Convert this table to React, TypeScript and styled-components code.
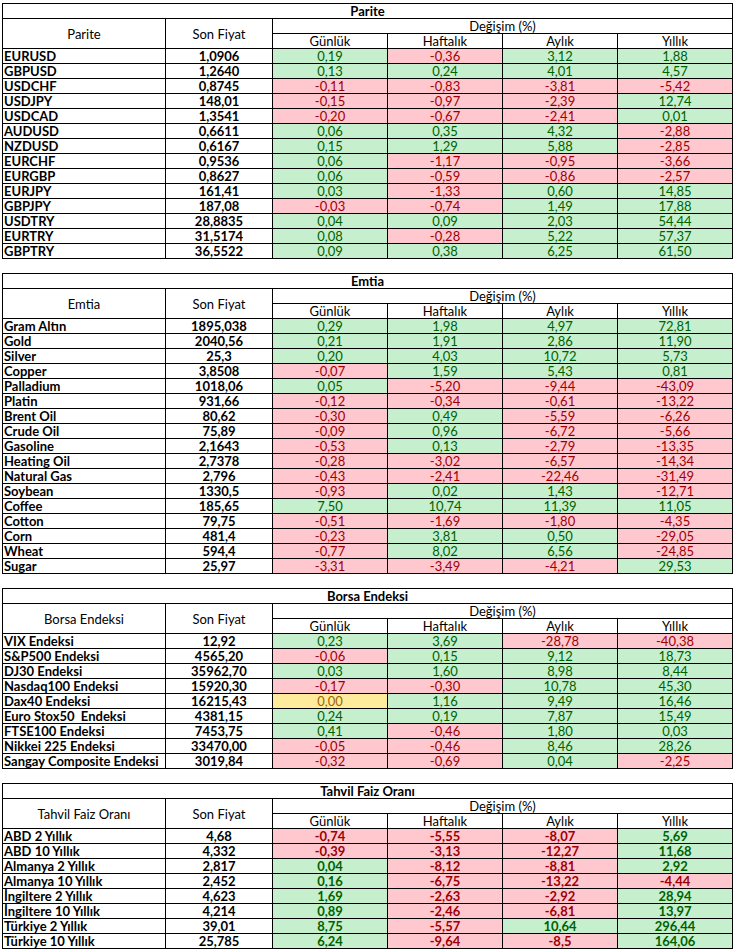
import React from 'react';
import styled, { createGlobalStyle } from 'styled-components';

type Tone = 'up' | 'down' | 'flat';

const GlobalStyle = createGlobalStyle`
  html, body { margin: 0; padding: 0; background: #ffffff; }
  body { font-family: Lato, "Liberation Sans", sans-serif; }
`;

const Page = styled.div`
  display: flex;
  flex-direction: column;
  gap: 14px;
  padding: 3px 0 0 2px;
  width: 730px;
`;

const Table = styled.table`
  border-collapse: collapse;
  table-layout: fixed;
  width: 730px;
  font-family: Lato, "Liberation Sans", sans-serif;
  font-size: 13px;
  color: #000000;
`;

const Cell = styled.td`
  border: 1px solid #000000;
  height: 14px;
  padding: 0 1px;
  line-height: 14px;
  white-space: pre;
  overflow: hidden;
  vertical-align: bottom;
`;

const TitleCell = styled(Cell)`
  text-align: center;
  font-weight: 700;
`;

const HeadCell = styled(Cell)`
  text-align: center;
  font-weight: 400;
  vertical-align: middle;
`;

const NameCell = styled(Cell)`
  text-align: left;
  font-weight: 700;
`;

const PriceCell = styled(Cell)`
  text-align: center;
  font-weight: 700;
`;

const toneBg: Record<Tone, string> = { up: '#C6EFCE', down: '#FFC7CE', flat: '#FFEB9C' };
const toneFg: Record<Tone, string> = { up: '#006100', down: '#9C0006', flat: '#9C6500' };

const ChangeCell = styled(Cell)<{ $tone: Tone; $bold?: boolean }>`
  text-align: center;
  font-weight: ${(p) => (p.$bold ? 700 : 400)};
  background: ${(p) => toneBg[p.$tone]};
  color: ${(p) => toneFg[p.$tone]};
`;

type Row = [string, string, string, string, string, string];

interface Section {
  title: string;
  label: string;
  bold?: boolean;
  rows: Row[];
}

const sections: Section[] = [
  {
    title: 'Parite',
    label: 'Parite',
    rows: [
      ['EURUSD', '1,0906', '0,19', '-0,36', '3,12', '1,88'],
      ['GBPUSD', '1,2640', '0,13', '0,24', '4,01', '4,57'],
      ['USDCHF', '0,8745', '-0,11', '-0,83', '-3,81', '-5,42'],
      ['USDJPY', '148,01', '-0,15', '-0,97', '-2,39', '12,74'],
      ['USDCAD', '1,3541', '-0,20', '-0,67', '-2,41', '0,01'],
      ['AUDUSD', '0,6611', '0,06', '0,35', '4,32', '-2,88'],
      ['NZDUSD', '0,6167', '0,15', '1,29', '5,88', '-2,85'],
      ['EURCHF', '0,9536', '0,06', '-1,17', '-0,95', '-3,66'],
      ['EURGBP', '0,8627', '0,06', '-0,59', '-0,86', '-2,57'],
      ['EURJPY', '161,41', '0,03', '-1,33', '0,60', '14,85'],
      ['GBPJPY', '187,08', '-0,03', '-0,74', '1,49', '17,88'],
      ['USDTRY', '28,8835', '0,04', '0,09', '2,03', '54,44'],
      ['EURTRY', '31,5174', '0,08', '-0,28', '5,22', '57,37'],
      ['GBPTRY', '36,5522', '0,09', '0,38', '6,25', '61,50'],
    ],
  },
  {
    title: 'Emtia',
    label: 'Emtia',
    rows: [
      ['Gram Altın', '1895,038', '0,29', '1,98', '4,97', '72,81'],
      ['Gold', '2040,56', '0,21', '1,91', '2,86', '11,90'],
      ['Silver', '25,3', '0,20', '4,03', '10,72', '5,73'],
      ['Copper', '3,8508', '-0,07', '1,59', '5,43', '0,81'],
      ['Palladium', '1018,06', '0,05', '-5,20', '-9,44', '-43,09'],
      ['Platin', '931,66', '-0,12', '-0,34', '-0,61', '-13,22'],
      ['Brent Oil', '80,62', '-0,30', '0,49', '-5,59', '-6,26'],
      ['Crude Oil', '75,89', '-0,09', '0,96', '-6,72', '-5,66'],
      ['Gasoline', '2,1643', '-0,53', '0,13', '-2,79', '-13,35'],
      ['Heating Oil', '2,7378', '-0,28', '-3,02', '-6,57', '-14,34'],
      ['Natural Gas', '2,796', '-0,43', '-2,41', '-22,46', '-31,49'],
      ['Soybean', '1330,5', '-0,93', '0,02', '1,43', '-12,71'],
      ['Coffee', '185,65', '7,50', '10,74', '11,39', '11,05'],
      ['Cotton', '79,75', '-0,51', '-1,69', '-1,80', '-4,35'],
      ['Corn', '481,4', '-0,23', '3,81', '0,50', '-29,05'],
      ['Wheat', '594,4', '-0,77', '8,02', '6,56', '-24,85'],
      ['Sugar', '25,97', '-3,31', '-3,49', '-4,21', '29,53'],
    ],
  },
  {
    title: 'Borsa Endeksi',
    label: 'Borsa Endeksi',
    rows: [
      ['VIX Endeksi', '12,92', '0,23', '3,69', '-28,78', '-40,38'],
      ['S&P500 Endeksi', '4565,20', '-0,06', '0,15', '9,12', '18,73'],
      ['DJ30 Endeksi', '35962,70', '0,03', '1,60', '8,98', '8,44'],
      ['Nasdaq100 Endeksi', '15920,30', '-0,17', '-0,30', '10,78', '45,30'],
      ['Dax40 Endeksi', '16215,43', '0,00', '1,16', '9,49', '16,46'],
      ['Euro Stox50  Endeksi', '4381,15', '0,24', '0,19', '7,87', '15,49'],
      ['FTSE100 Endeksi', '7453,75', '0,41', '-0,46', '1,80', '0,03'],
      ['Nikkei 225 Endeksi', '33470,00', '-0,05', '-0,46', '8,46', '28,26'],
      ['Sangay Composite Endeksi', '3019,84', '-0,32', '-0,69', '0,04', '-2,25'],
    ],
  },
  {
    title: 'Tahvil Faiz Oranı',
    label: 'Tahvil Faiz Oranı',
    bold: true,
    rows: [
      ['ABD 2 Yıllık', '4,68', '-0,74', '-5,55', '-8,07', '5,69'],
      ['ABD 10 Yıllık', '4,332', '-0,39', '-3,13', '-12,27', '11,68'],
      ['Almanya 2 Yıllık', '2,817', '0,04', '-8,12', '-8,81', '2,92'],
      ['Almanya 10 Yıllık', '2,452', '0,16', '-6,75', '-13,22', '-4,44'],
      ['İngiltere 2 Yıllık', '4,623', '1,69', '-2,63', '-2,92', '28,94'],
      ['İngiltere 10 Yıllık', '4,214', '0,89', '-2,46', '-6,81', '13,97'],
      ['Türkiye 2 Yıllık', '39,01', '8,75', '-5,57', '10,64', '296,44'],
      ['Türkiye 10 Yıllık', '25,785', '6,24', '-9,64', '-8,5', '164,06'],
    ],
  },
];

const colWidths = [163, 107, 115, 115, 115, 115];
const periods = ['Günlük', 'Haftalık', 'Aylık', 'Yıllık'];

function toneOf(v: string): Tone {
  const n = parseFloat(v.replace(',', '.'));
  if (n > 0) return 'up';
  if (n < 0) return 'down';
  return 'flat';
}

function MarketTable({ section }: { section: Section }) {
  return (
    <Table>
      <colgroup>
        {colWidths.map((w, i) => (
          <col key={i} style={{ width: w }} />
        ))}
      </colgroup>
      <thead>
        <tr>
          <TitleCell colSpan={6}>{section.title}</TitleCell>
        </tr>
        <tr>
          <HeadCell rowSpan={2}>{section.label}</HeadCell>
          <HeadCell rowSpan={2}>Son Fiyat</HeadCell>
          <HeadCell colSpan={4}>Değişim (%)</HeadCell>
        </tr>
        <tr>
          {periods.map((p) => (
            <HeadCell key={p}>{p}</HeadCell>
          ))}
        </tr>
      </thead>
      <tbody>
        {section.rows.map((r) => (
          <tr key={r[0]}>
            <NameCell>{r[0]}</NameCell>
            <PriceCell>{r[1]}</PriceCell>
            {r.slice(2).map((v, i) => (
              <ChangeCell key={i} $tone={toneOf(v)} $bold={section.bold}>
                {v}
              </ChangeCell>
            ))}
          </tr>
        ))}
      </tbody>
    </Table>
  );
}

export default function App() {
  return (
    <>
      <GlobalStyle />
      <Page>
        {sections.map((s) => (
          <MarketTable key={s.title} section={s} />
        ))}
      </Page>
    </>
  );
}
